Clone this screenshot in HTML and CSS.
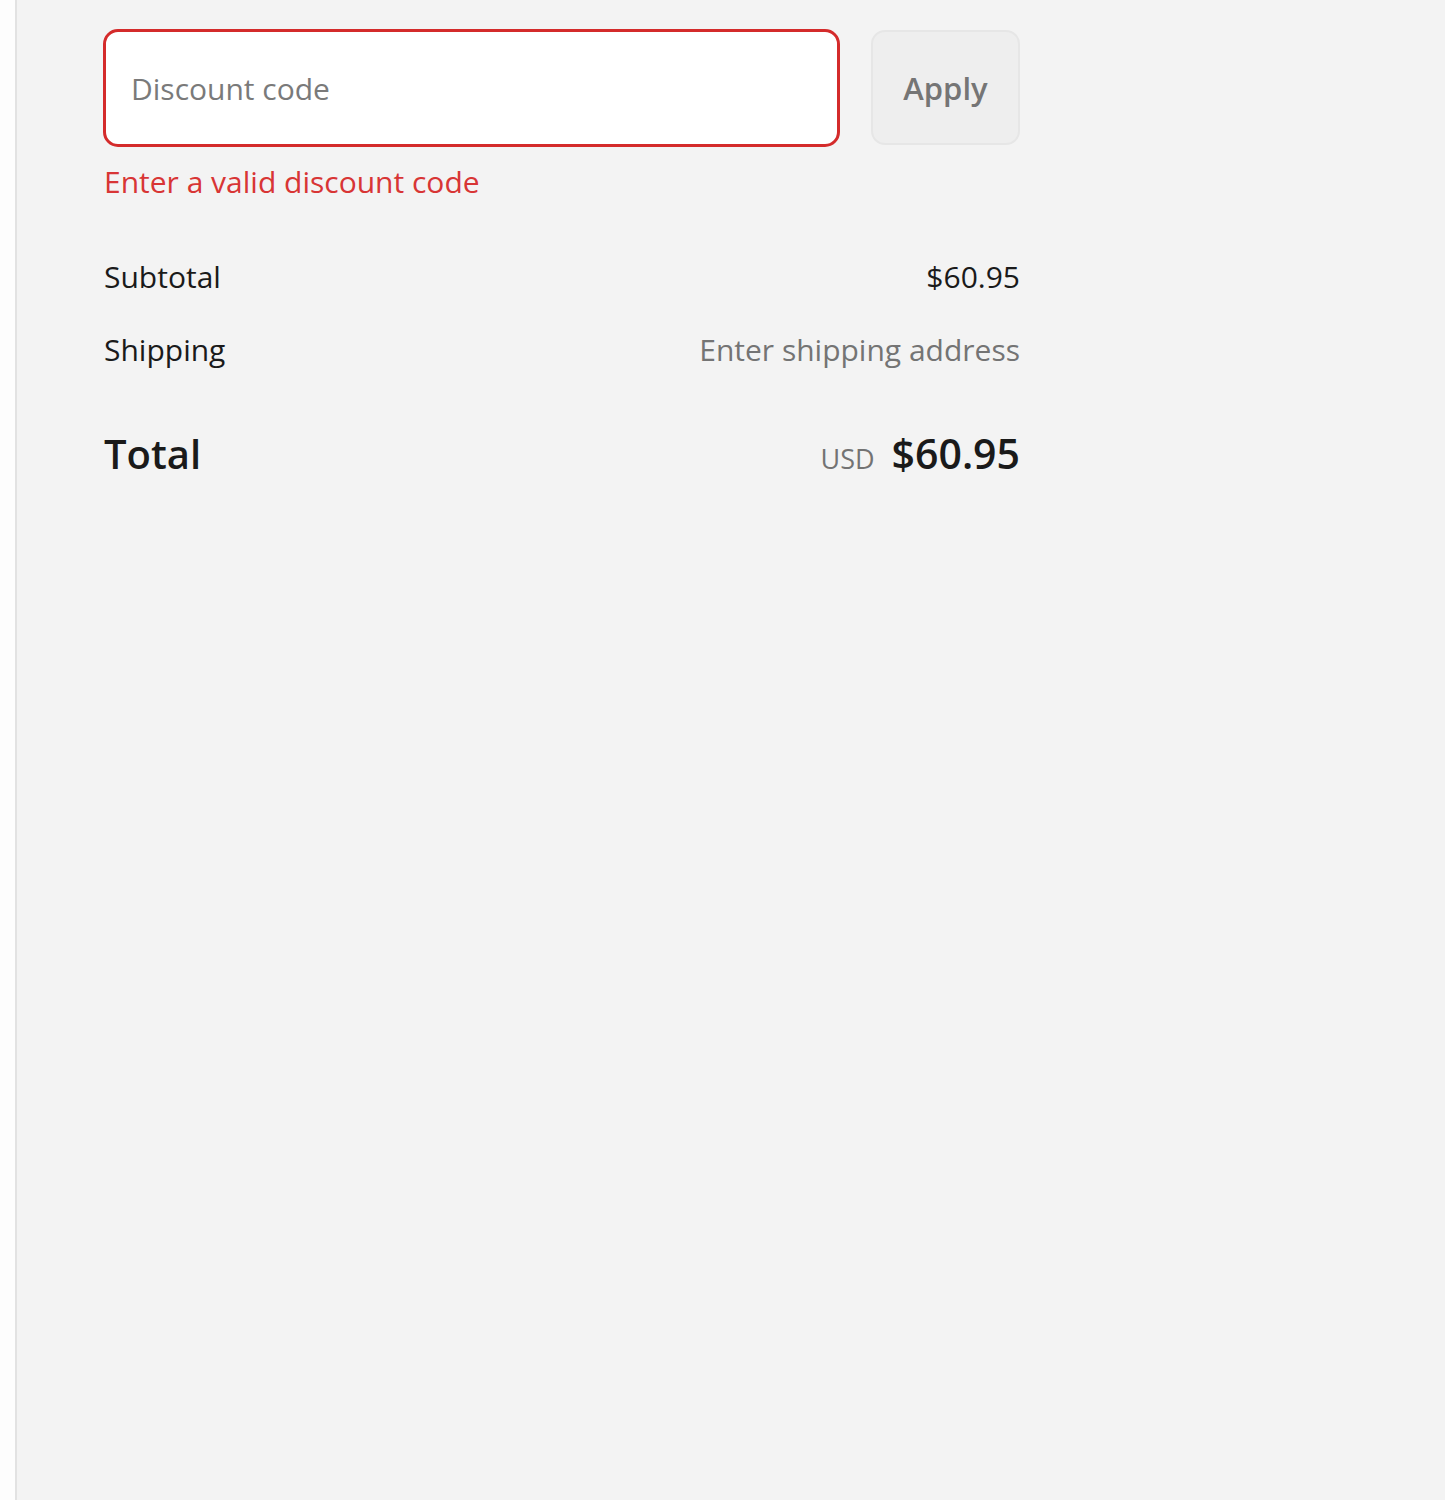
FILE: index.html
```html
<!DOCTYPE html>
<html lang="en">
<head>
<meta charset="utf-8">
<title>Order summary</title>
<link rel="stylesheet" href="styles.css">
</head>
<body>
<div class="page">
  <div class="side"></div>
  <main class="summary">
    <div class="discount">
      <div class="field">
        <input class="field-input" type="text" placeholder="Discount code" aria-invalid="true">
      </div>
      <button class="apply" type="button" disabled>Apply</button>
    </div>
    <p class="error">Enter a valid discount code</p>
    <div class="lines">
      <div class="line">
        <span class="label">Subtotal</span>
        <span class="value">$60.95</span>
      </div>
      <div class="line">
        <span class="label">Shipping</span>
        <span class="value muted">Enter shipping address</span>
      </div>
      <div class="line total">
        <span class="label">Total</span>
        <span class="value"><span class="currency">USD</span><span class="amount">$60.95</span></span>
      </div>
    </div>
  </main>
</div>
</body>
</html>
```

FILE: styles.css
```css
html, body {
  margin: 0;
  padding: 0;
  height: 100%;
}
body {
  font-family: "Open Sans", "Noto Sans", "Liberation Sans", sans-serif;
  color: #1a1a1a;
  background: #f3f3f3;
}
.page {
  display: flex;
  min-height: 1500px;
}
.side {
  width: 15px;
  flex: none;
  background: #fdfdfd;
  border-right: 2px solid #e2e2e2;
  box-shadow: 1px 0 2px rgba(0,0,0,0.04);
}
.summary {
  flex: 1;
  background: #f3f3f3;
  padding: 29px 0 0 86px;
}
.discount {
  display: flex;
  gap: 31px;
  width: 917px;
  align-items: flex-start;
}
.field {
  width: 737px;
  flex: none;
}
.field-input {
  box-sizing: border-box;
  width: 100%;
  height: 118px;
  border: 3px solid #d42b2b;
  border-radius: 15px;
  background: #fff;
  padding: 0 0 0 25px;
  font-family: inherit;
  font-size: 30px;
  color: #333;
  outline: none;
}
.field-input::placeholder {
  color: #7a7a7a;
}
.apply {
  box-sizing: border-box;
  flex: 1;
  height: 115px;
  margin-top: 1px;
  background: #eeeeee;
  border: 2px solid #e6e6e6;
  border-radius: 14px;
  font-family: inherit;
  font-size: 31px;
  font-weight: 600;
  color: #757575;
}
.error {
  margin: 15px 0 0 1px;
  font-size: 30px;
  line-height: 40px;
  color: #d83535;
}
.lines {
  width: 917px;
  margin-top: 55px;
}
.line {
  display: flex;
  justify-content: space-between;
  align-items: baseline;
  font-size: 30px;
  line-height: 40px;
  margin-bottom: 33px;
  padding-left: 1px;
}
.muted {
  color: #747474;
}
.total {
  margin-top: 58px;
  font-size: 40px;
  font-weight: 600;
  line-height: 50px;
}
.amount {
  font-size: 41px;
}
.currency {
  font-size: 27px;
  font-weight: 400;
  color: #737373;
  margin-right: 17px;
}
```
